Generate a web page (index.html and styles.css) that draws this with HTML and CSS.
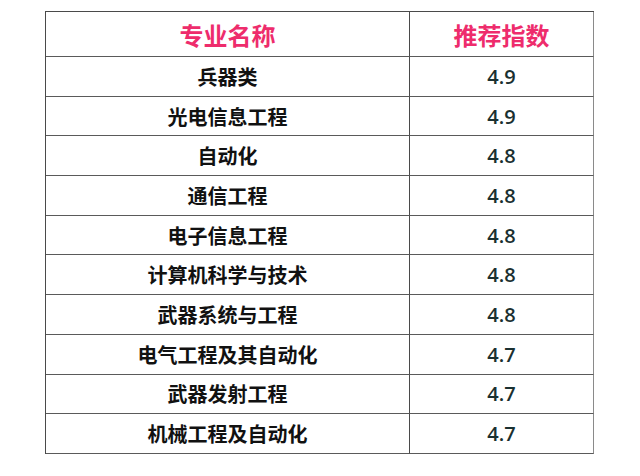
FILE: index.html
```html
<!DOCTYPE html>
<html lang="zh">
<head>
<meta charset="utf-8">
<link rel="stylesheet" href="styles.css">
</head>
<body>
<div class="page">
  <div class="table">
    <div class="cell head">专业名称</div><div class="cell head">推荐指数</div>
    <div class="cell name">兵器类</div><div class="cell num">4.9</div>
    <div class="cell name">光电信息工程</div><div class="cell num">4.9</div>
    <div class="cell name">自动化</div><div class="cell num">4.8</div>
    <div class="cell name">通信工程</div><div class="cell num">4.8</div>
    <div class="cell name">电子信息工程</div><div class="cell num">4.8</div>
    <div class="cell name">计算机科学与技术</div><div class="cell num">4.8</div>
    <div class="cell name">武器系统与工程</div><div class="cell num">4.8</div>
    <div class="cell name">电气工程及其自动化</div><div class="cell num">4.7</div>
    <div class="cell name">武器发射工程</div><div class="cell num">4.7</div>
    <div class="cell name">机械工程及自动化</div><div class="cell num">4.7</div>
  </div>
</div>
</body>
</html>
```

FILE: styles.css
```css
html, body {
  margin: 0;
  padding: 0;
  background: #ffffff;
}
.page {
  width: 640px;
  height: 476px;
  padding: 11px 0 0 45px;
  box-sizing: border-box;
}
.table {
  display: grid;
  grid-template-columns: 364px 184px;
  grid-template-rows: 45px repeat(10, 39.7px);
  width: 549px;
  border-left: 1px solid #4a4a4a;
  border-top: 1px solid #4a4a4a;
  box-sizing: border-box;
}
.cell {
  display: flex;
  align-items: center;
  justify-content: center;
  border-right: 1px solid #4a4a4a;
  border-bottom: 1px solid #5a5a5a;
  box-sizing: border-box;
}
.cell:nth-child(2n) {
  border-right-color: #8a8a8a;
}
.head {
  font-family: "Noto Sans CJK SC", "Noto Sans", sans-serif;
  font-weight: 700;
  font-size: 24px;
  color: #ee2c6c;
}
.name {
  font-family: "Noto Sans CJK SC", "Noto Sans", sans-serif;
  font-weight: 700;
  font-size: 20px;
  color: #111111;
}
.num {
  font-family: "Open Sans", "Noto Sans", sans-serif;
  font-weight: 600;
  font-size: 20px;
  color: #1a3030;
}
```
